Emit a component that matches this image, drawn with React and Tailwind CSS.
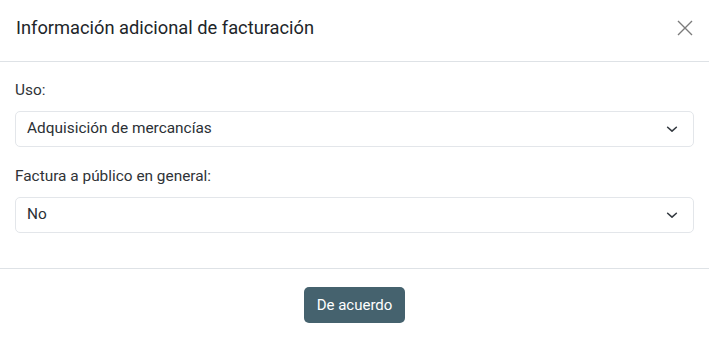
import React from "react";

const Chevron = () => (
  <svg width="14" height="14" viewBox="0 0 16 16" fill="none" stroke="#343a40" strokeWidth="1.8" strokeLinecap="round" strokeLinejoin="round">
    <path d="M3 6l5 4.5L13 6" />
  </svg>
);

const SelectBox = ({ value }) => (
  <div className="flex items-center justify-between h-[36px] border border-[#e3e6ea] rounded-[5px] pl-[11px] pr-[14px] text-[15.4px] text-[#2b3035] bg-white">
    <span>{value}</span>
    <Chevron />
  </div>
);

const App = () => {
  return (
    <div className="w-[709px] h-[338px] bg-white font-['Roboto',sans-serif] text-[#212529] flex flex-col">
      {/* Header */}
      <div className="flex items-center justify-between h-[62px] pl-4 pr-4 pb-[5px] border-b border-[#dee2e6]">
        <h2 className="text-[18.3px] leading-none">Información adicional de facturación</h2>
        <svg width="16" height="16" viewBox="0 0 16 16" stroke="#7b7b7b" strokeWidth="1.4">
          <path d="M1 1l14 14M15 1L1 15" />
        </svg>
      </div>

      {/* Body */}
      <div className="px-[15px] pt-4 pb-[35px] border-b border-[#dee2e6]">
        <label className="block text-[15.4px] leading-6 mb-[9px] text-[#2f3337]">Uso:</label>
        <SelectBox value="Adquisición de mercancías" />
        <label className="block text-[15.4px] leading-6 mt-[17px] mb-[9px] text-[#2f3337]">Factura a público en general:</label>
        <SelectBox value="No" />
      </div>

      {/* Footer */}
      <div className="flex justify-center pt-[18px]">
        <button className="h-[36px] px-[13px] rounded-[5px] bg-[#45626e] text-white text-[15px]">
          De acuerdo
        </button>
      </div>
    </div>
  );
};

export default App;
